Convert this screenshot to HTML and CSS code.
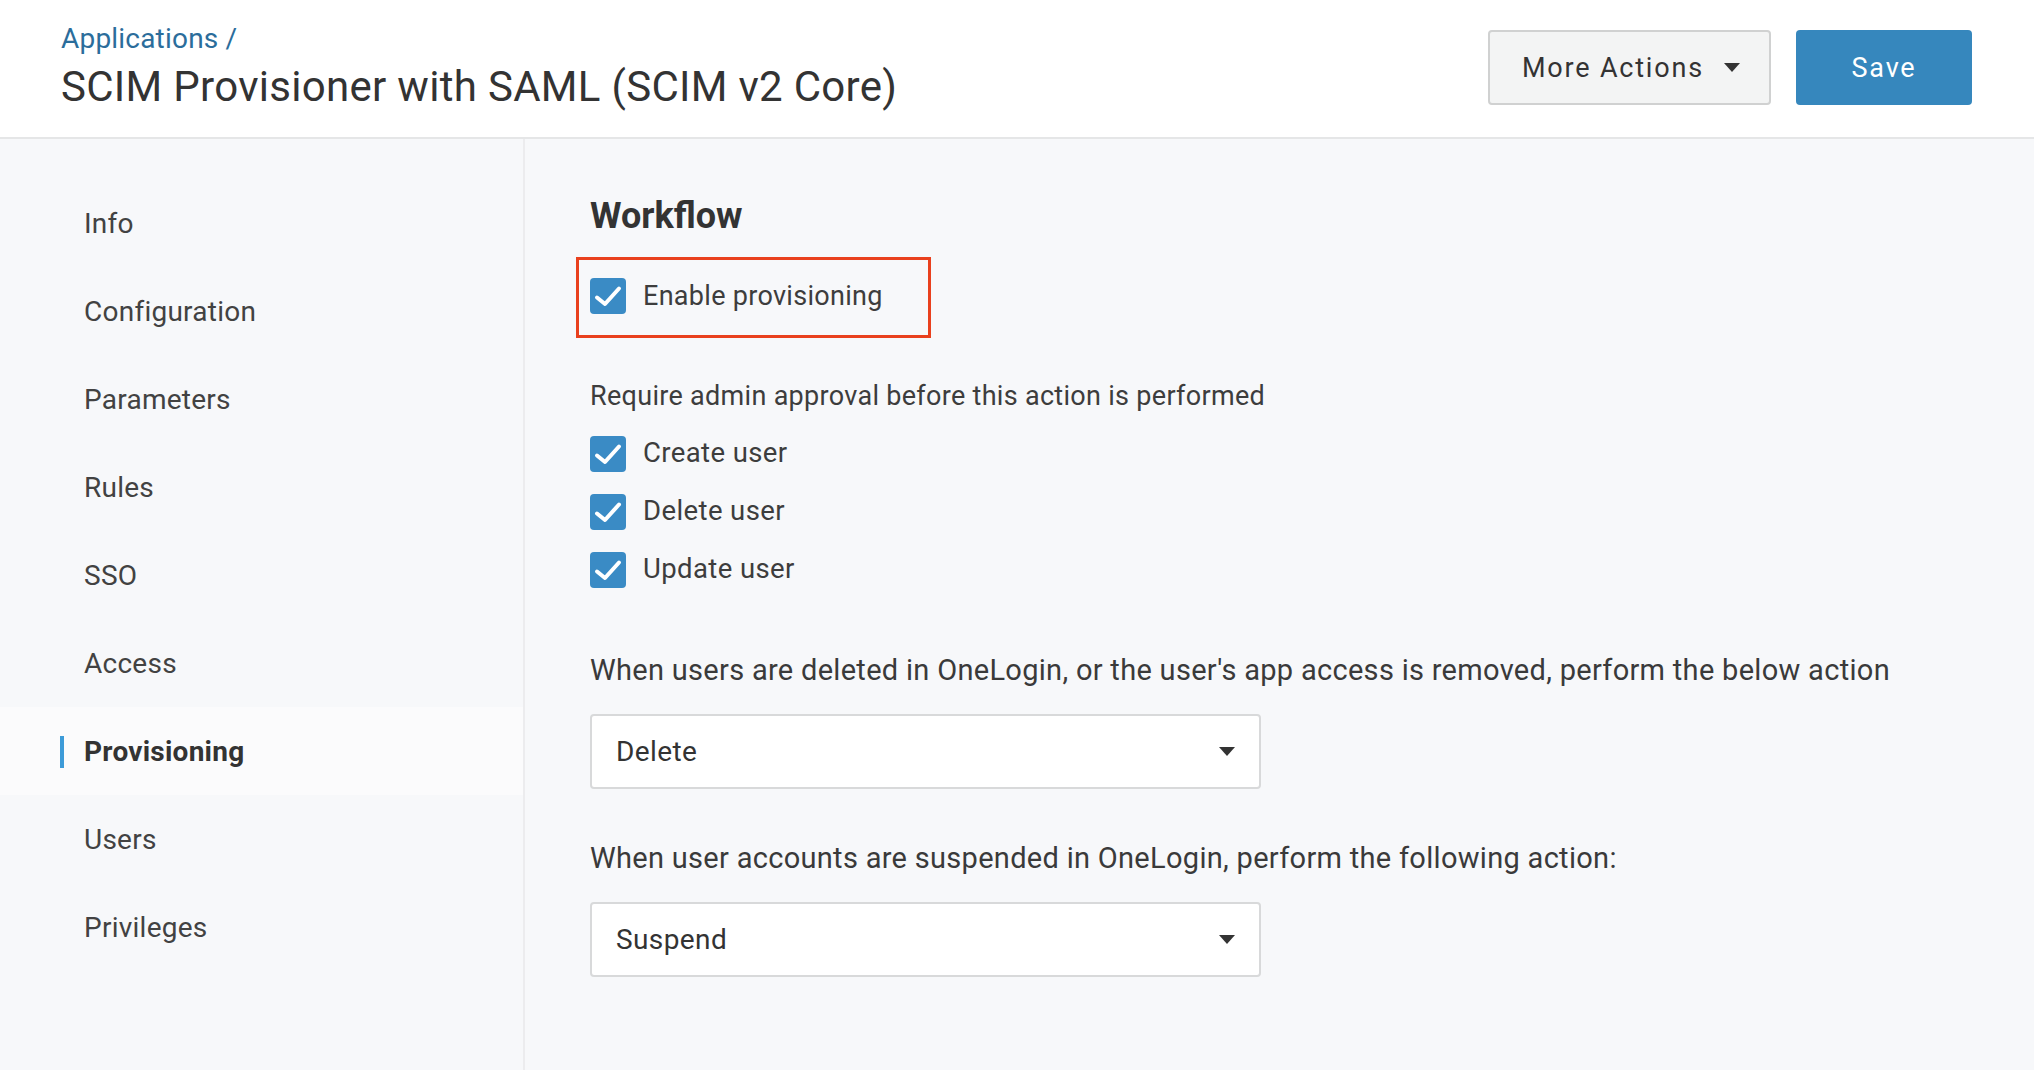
FILE: index.html
```html
<!DOCTYPE html>
<html lang="en">
<head>
<meta charset="utf-8">
<title>SCIM Provisioner with SAML (SCIM v2 Core)</title>
<link rel="stylesheet" href="styles.css">
</head>
<body>
<header class="topbar">
  <div class="titles">
    <a class="crumb" href="#">Applications /</a>
    <h1 class="title">SCIM Provisioner with SAML (SCIM v2 Core)</h1>
  </div>
  <div class="actions">
    <button class="btn btn-secondary">More Actions<span class="caret"></span></button>
    <button class="btn btn-primary">Save</button>
  </div>
</header>
<div class="main">
  <nav class="sidebar">
    <a class="nav-item" href="#">Info</a>
    <a class="nav-item" href="#">Configuration</a>
    <a class="nav-item" href="#">Parameters</a>
    <a class="nav-item" href="#">Rules</a>
    <a class="nav-item" href="#">SSO</a>
    <a class="nav-item" href="#">Access</a>
    <a class="nav-item active" href="#">Provisioning</a>
    <a class="nav-item" href="#">Users</a>
    <a class="nav-item" href="#">Privileges</a>
  </nav>
  <section class="content">
    <h2 class="heading">Workflow</h2>
    <div class="highlight">
      <label class="check-row">
        <span class="checkbox"><svg viewBox="0 0 36 36" width="36" height="36"><path d="M7 19.5 L15 26 L29 10.5" fill="none" stroke="#fff" stroke-width="4" stroke-linecap="round" stroke-linejoin="round"/></svg></span>
        <span class="check-label">Enable provisioning</span>
      </label>
    </div>
    <p class="note">Require admin approval before this action is performed</p>
    <div class="check-list">
      <label class="check-row">
        <span class="checkbox"><svg viewBox="0 0 36 36" width="36" height="36"><path d="M7 19.5 L15 26 L29 10.5" fill="none" stroke="#fff" stroke-width="4" stroke-linecap="round" stroke-linejoin="round"/></svg></span>
        <span class="check-label wide">Create user</span>
      </label>
      <label class="check-row">
        <span class="checkbox"><svg viewBox="0 0 36 36" width="36" height="36"><path d="M7 19.5 L15 26 L29 10.5" fill="none" stroke="#fff" stroke-width="4" stroke-linecap="round" stroke-linejoin="round"/></svg></span>
        <span class="check-label wide">Delete user</span>
      </label>
      <label class="check-row">
        <span class="checkbox"><svg viewBox="0 0 36 36" width="36" height="36"><path d="M7 19.5 L15 26 L29 10.5" fill="none" stroke="#fff" stroke-width="4" stroke-linecap="round" stroke-linejoin="round"/></svg></span>
        <span class="check-label wide">Update user</span>
      </label>
    </div>
    <p class="field-label first">When users are deleted in OneLogin, or the user's app access is removed, perform the below action</p>
    <div class="select"><span class="select-value">Delete</span><span class="caret"></span></div>
    <p class="field-label">When user accounts are suspended in OneLogin, perform the following action:</p>
    <div class="select"><span class="select-value">Suspend</span><span class="caret"></span></div>
  </section>
</div>
</body>
</html>
```

FILE: styles.css
```css
* { box-sizing: border-box; }

html, body {
  margin: 0;
  padding: 0;
  height: 100%;
}

body {
  font-family: Roboto, "Liberation Sans", Arial, sans-serif;
  color: #3a3a3a;
  background: #f7f8fa;
  display: flex;
  flex-direction: column;
  overflow: hidden;
}

/* Header */
.topbar {
  height: 139px;
  flex: none;
  background: #ffffff;
  border-bottom: 2px solid #e5e6e7;
  display: flex;
  justify-content: space-between;
  align-items: flex-start;
  padding: 0 62px 0 61px;
}

.titles {
  padding-top: 21px;
  display: flex;
  flex-direction: column;
}

.crumb {
  font-size: 28px;
  line-height: 36px;
  color: #2b6d9b;
  text-decoration: none;
  letter-spacing: 0.2px;
}

.title {
  margin: 5px 0 0;
  font-size: 42px;
  line-height: 50px;
  font-weight: 400;
  color: #333333;
  letter-spacing: 0.3px;
}

.actions {
  padding-top: 30px;
  display: flex;
  gap: 25px;
}

.btn {
  height: 75px;
  font-family: Roboto, "Liberation Sans", Arial, sans-serif;
  font-size: 27px;
  letter-spacing: 1.8px;
  border-radius: 4px;
  display: flex;
  align-items: center;
  cursor: pointer;
}

.btn-secondary {
  width: 283px;
  padding: 0 29px 0 32px;
  background: #f3f4f4;
  border: 2px solid #d0d1d1;
  color: #333333;
  justify-content: space-between;
}

.btn-primary {
  width: 176px;
  justify-content: center;
  background: #3687bd;
  border: 0;
  color: #ffffff;
}

.caret {
  width: 0;
  height: 0;
  border-left: 8px solid transparent;
  border-right: 8px solid transparent;
  border-top: 9px solid #333333;
  flex: none;
}

/* Main */
.main {
  flex: 1;
  display: flex;
  min-height: 0;
}

.sidebar {
  width: 525px;
  flex: none;
  background: #f7f8fa;
  border-right: 2px solid #ececee;
  padding-top: 40px;
  display: flex;
  flex-direction: column;
}

.nav-item {
  height: 88px;
  display: flex;
  align-items: center;
  padding-left: 84px;
  font-size: 28px;
  letter-spacing: 0.25px;
  color: #424242;
  text-decoration: none;
  position: relative;
}

.nav-item.active {
  background: #fbfbfc;
  font-weight: 700;
  color: #333333;
}

.nav-item.active::before {
  content: "";
  position: absolute;
  left: 60px;
  top: 29px;
  width: 4px;
  height: 32px;
  background: #3d9bd8;
}

.content {
  flex: 1;
  padding: 59px 0 0 65px;
  display: flex;
  flex-direction: column;
  align-items: flex-start;
}

.heading {
  margin: 0;
  font-size: 36px;
  line-height: 36px;
  font-weight: 700;
  color: #333333;
}

.highlight {
  margin: 23px 0 0 -14px;
  border: 3px solid #e9401d;
  padding: 18px 45px 21px 11px;
}

.check-row {
  display: flex;
  align-items: center;
  height: 36px;
  gap: 17px;
}

.checkbox {
  width: 36px;
  height: 36px;
  border-radius: 4px;
  background: #3a8bc5;
  display: block;
  flex: none;
}

.checkbox svg { display: block; }

.check-label {
  font-size: 27px;
  line-height: 36px;
  letter-spacing: 0.3px;
  color: #3d3d3d;
}

.check-label.wide {
  font-size: 27.5px;
  letter-spacing: 0.4px;
  margin-top: -3px;
}

.note {
  margin: 40px 0 0;
  font-size: 27px;
  line-height: 36px;
  letter-spacing: 0.3px;
  color: #3d3d3d;
}

.check-list {
  margin-top: 22px;
  display: flex;
  flex-direction: column;
  gap: 22px;
}

.field-label {
  margin: 51px 0 0;
  font-size: 29px;
  line-height: 36px;
  letter-spacing: 0.3px;
  color: #3a3a3a;
}

.field-label.first { margin-top: 64px; }

.select {
  margin-top: 26px;
  width: 671px;
  height: 75px;
  background: #ffffff;
  border: 2px solid #d8d9da;
  border-radius: 4px;
  display: flex;
  align-items: center;
  justify-content: space-between;
  padding: 0 24px 0 24px;
}

.select-value {
  font-size: 28px;
  letter-spacing: 0.4px;
  color: #333333;
}
```
